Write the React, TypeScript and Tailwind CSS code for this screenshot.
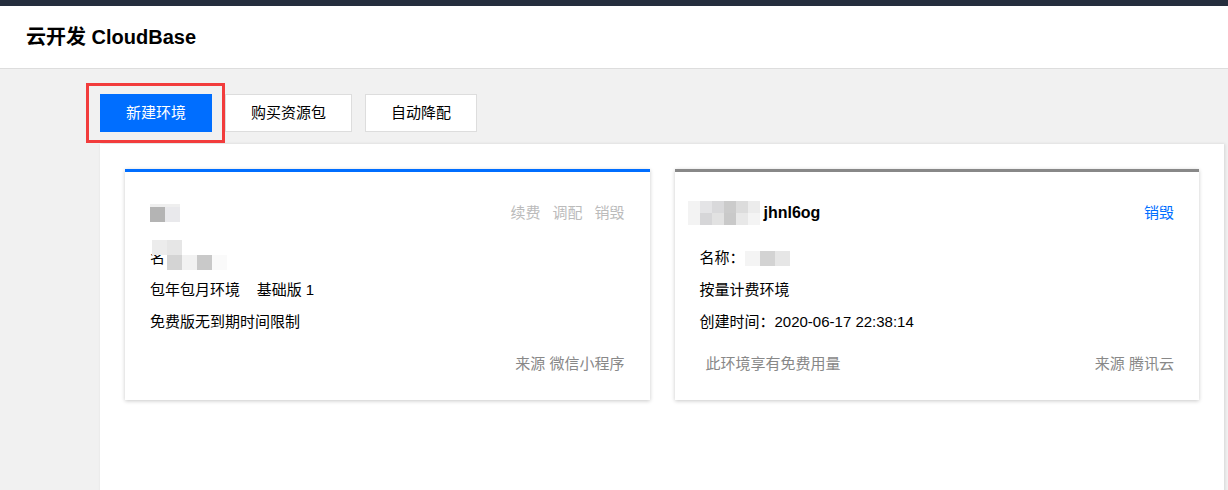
import type { ReactNode } from "react";

const font = "font-['Liberation_Sans','Noto_Sans_CJK_SC',sans-serif]";

// pixelated blur blocks, like the masked parts of the screenshot
function Mosaic({ rows, cell = 15 }: { rows: string[][]; cell?: number }) {
  return (
    <div className="flex flex-col">
      {rows.map((row, i) => (
        <div key={i} className="flex">
          {row.map((c, j) => (
            <div
              key={j}
              style={{ width: cell, height: cell, background: c }}
            />
          ))}
        </div>
      ))}
    </div>
  );
}

function EnvCard({
  accent,
  title,
  actions,
  lines,
  footerLeft,
  footerRight,
}: {
  accent: string;
  title: ReactNode;
  actions: ReactNode;
  lines: ReactNode[];
  footerLeft?: string;
  footerRight: string;
}) {
  return (
    <div
      className={`flex flex-col border-t-[3px] bg-white px-[25px] pt-[29px] pb-[26px] shadow-[0_1px_4px_rgba(0,0,0,0.22)] ${accent}`}
    >
      <div className="flex h-[24px] items-center justify-between">
        {title}
        {actions}
      </div>
      <div className="mt-[23px] flex flex-col gap-[12px] text-[15px] leading-[20px] text-black">
        {lines.map((l, i) => (
          <div key={i} className="flex h-[20px] items-center">
            {l}
          </div>
        ))}
      </div>
      <div className="mt-[22px] flex h-[20px] items-center justify-between text-[15px] leading-[20px] text-[#888888]">
        <span className="pl-[6px]">{footerLeft}</span>
        <span>{footerRight}</span>
      </div>
    </div>
  );
}

export default function App() {
  return (
    <div className={`min-h-screen bg-[#f1f1f1] ${font}`}>
      <div className="h-[6px] bg-[#252e3d]" />
      <header className="flex h-[63px] items-center border-b border-[#dddddd] bg-white px-[26px]">
        <h1 className="text-[20px] font-bold leading-none text-black">
          云开发 CloudBase
        </h1>
      </header>

      <main className="ml-[100px] mr-[4px]">
        <div className="flex gap-[13px] pt-[25px]">
          <div className="relative">
            <button className="h-[38px] w-[112px] bg-[#006eff] text-[15px] text-white">
              新建环境
            </button>
            <div className="pointer-events-none absolute -left-[14px] -top-[11px] -right-[13px] -bottom-[11px] border-[3px] border-[#f23c3c]" />
          </div>
          <button className="h-[38px] w-[127px] border border-[#dddddd] bg-white text-[15px] text-black">
            购买资源包
          </button>
          <button className="h-[38px] w-[112px] border border-[#dddddd] bg-white text-[15px] text-black">
            自动降配
          </button>
        </div>

        <section className="mt-[12px] min-h-[360px] bg-white p-[25px] shadow-[1px_0_3px_rgba(0,0,0,0.12)]">
          <div className="grid grid-cols-2 gap-[25px]">
            <EnvCard
              accent="border-[#006eff]"
              title={
                <div className="flex flex-col">
                  <div className="h-[3px] w-[30px] bg-[#efefef]" />
                  <Mosaic rows={[["#b4b4b4", "#e9e9ec"]]} />
                </div>
              }
              actions={
                <div className="flex gap-[12px] text-[15px] text-[#bbbbbb]">
                  <span>续费</span>
                  <span>调配</span>
                  <span>销毁</span>
                </div>
              }
              lines={[
                <div className="relative flex items-center">
                  <span className="w-[15px] overflow-hidden">名</span>
                  <div className="absolute left-[2px] -top-[8px]">
                    <Mosaic
                      rows={[
                        ["#ececec", "#e6e6e6", "transparent", "transparent", "transparent"],
                        ["transparent", "#d4d4d4", "#f2f2f2", "#c9c9c9", "#fafafa"],
                      ]}
                    />
                  </div>
                </div>,
                <span>包年包月环境&nbsp;&nbsp;&nbsp;&nbsp;基础版 1</span>,
                <span>免费版无到期时间限制</span>,
              ]}
              footerRight="来源 微信小程序"
            />
            <EnvCard
              accent="border-[#888888]"
              title={
                <div className="flex items-center">
                  <div className="-ml-[12px] mr-[4px]">
                    <Mosaic
                      rows={[
                        ["#f3f3f3", "#e4e4e6", "#d9d9db", "#cbcbcb", "#dcdcdc", "#ececec"],
                        ["#f3f3f3", "#d6d6d8", "#e2e2e2", "#c9c9c9", "#e8e8e8", "#f4f4f4"],
                      ]}
                      cell={12}
                    />
                  </div>
                  <span className="text-[16px] font-bold text-black">jhnl6og</span>
                </div>
              }
              actions={<span className="text-[15px] text-[#006eff]">销毁</span>}
              lines={[
                <div className="flex items-center">
                  <span>名称：</span>
                  <Mosaic rows={[["#f4f4f4", "#d3d3d3", "#e6e6e6"]]} />
                </div>,
                <span>按量计费环境</span>,
                <span>创建时间：2020-06-17 22:38:14</span>,
              ]}
              footerLeft="此环境享有免费用量"
              footerRight="来源 腾讯云"
            />
          </div>
        </section>
      </main>
    </div>
  );
}
